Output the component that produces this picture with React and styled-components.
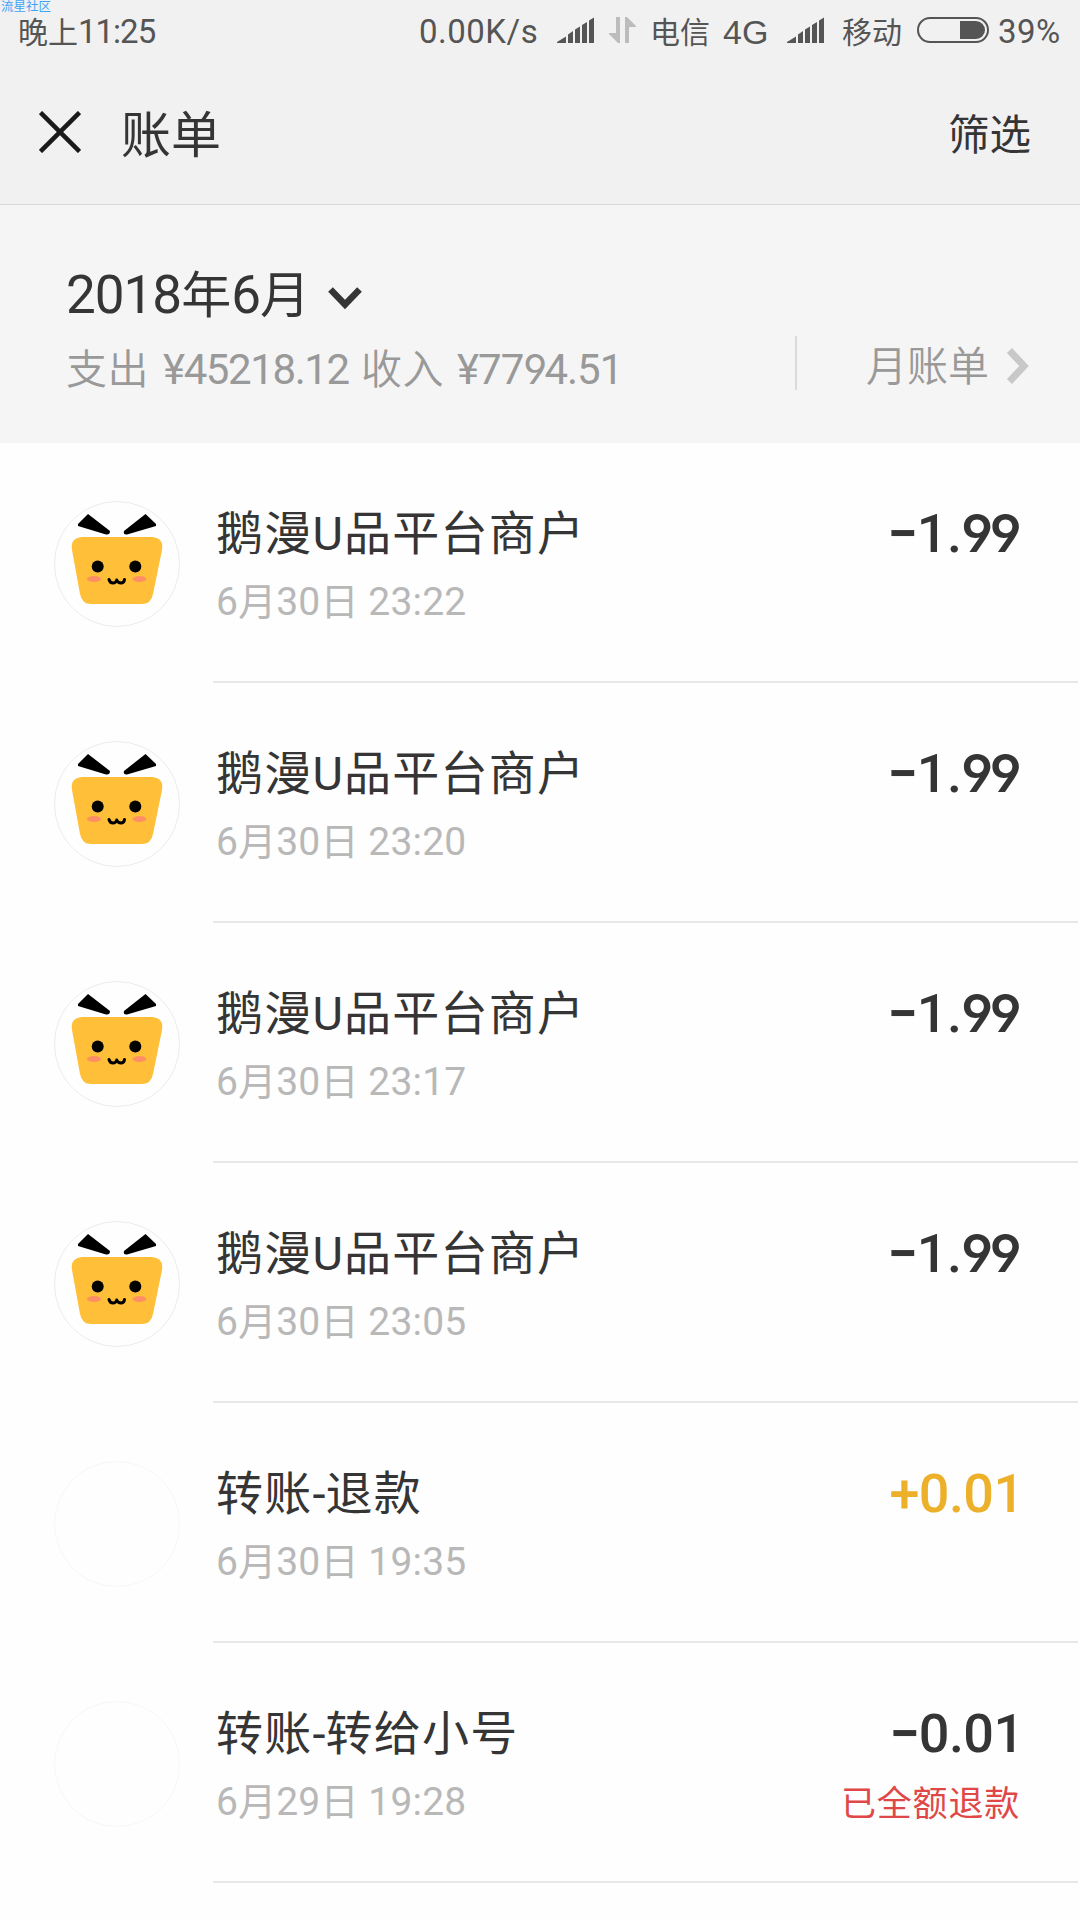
import styled, { createGlobalStyle } from "styled-components";

const GlobalStyle = createGlobalStyle`
  * {
    box-sizing: border-box;
  }
  body {
    margin: 0;
    background-color: #fefefe;
    font-family: Roboto, "Noto Sans CJK SC", sans-serif;
    color: #353535;
  }
`;

const Screen = styled.div`
  position: relative;
  width: 1080px;
  height: 1920px;
  overflow: hidden;
  background-color: #fefefe;
`;

const Watermark = styled.div`
  position: absolute;
  top: 0;
  left: 1px;
  font-size: 12.5px;
  line-height: 13px;
  color: #3fa4f5;
`;

const StatusBar = styled.div`
  height: 64px;
  padding: 0 18px 0 18px;
  display: flex;
  background-color: #f1f1f1;
  color: #555;
  font-size: 33px;
  line-height: 64px;
  white-space: nowrap;
`;

const StatusItem = styled.div`
  flex: none;
  width: ${(props) => props.$width}px;
  letter-spacing: ${(props) => props.$spacing || 0}px;

  svg {
    display: block;
  }
`;

const Network = styled(StatusItem)`
  font-family: "Liberation Sans", sans-serif;
  font-size: 34px;
`;

const Cjk = styled.span`
  font-size: ${(props) => props.$size}px;
  letter-spacing: 0;
  line-height: 0;
`;

const OpenNine = styled.span`
  font-family: Inter, sans-serif;
  font-feature-settings: "cv04";
  font-size: 0.975em;
  font-weight: ${(props) => props.$weight || 400};
  letter-spacing: -0.065em;
  line-height: 0;
`;

const Header = styled.div`
  height: 141px;
  padding: 3px 49px 0 39px;
  display: flex;
  align-items: center;
  background-color: #f1f1f1;
  border-bottom: 1px solid #d9d9d9;
`;

const CloseIcon = styled.svg`
  margin-bottom: 7px;
`;

const Title = styled.h1`
  flex: 1;
  margin: 0 0 0 40px;
  font-size: 50px;
  font-weight: 400;
  line-height: 60px;
`;

const Filter = styled.span`
  font-size: 41.5px;
  line-height: 60px;
`;

const Summary = styled.div`
  height: 238px;
  display: flex;
  background-color: #f5f5f5;
`;

const SummaryLeft = styled.div`
  width: 795px;
  padding: 56px 0 0 66px;
  white-space: nowrap;
`;

const Month = styled.div`
  height: 69px;
  display: flex;
  font-size: 53px;
  line-height: 68px;
  letter-spacing: -1px;
`;

const MonthArrow = styled.svg`
  margin: 26px 0 0 18px;
`;

const Totals = styled.div`
  height: 70px;
  display: flex;
  font-size: 42px;
  line-height: 80px;
  color: #999;
`;

const TotalLabel = styled.span`
  width: ${(props) => props.$width}px;
  font-size: 41px;
  font-weight: 350;
  letter-spacing: 0.4px;
`;

const Money = styled.span`
  width: ${(props) => props.$width}px;
  letter-spacing: ${(props) => props.$spacing}px;
`;

const Split = styled.div`
  width: 2px;
  height: 54px;
  margin-top: 131px;
  background-color: #dadada;
`;

const MonthBill = styled.div`
  height: 54px;
  margin: 135px 0 0 69px;
  display: flex;
  align-items: center;
  font-size: 41px;
  font-weight: 350;
  line-height: 54px;
  color: #999;
`;

const BillArrow = styled.svg`
  margin: -3px 0 0 18px;
`;

const Row = styled.div`
  height: 240px;
  padding-left: 54px;
  display: flex;
`;

const Avatar = styled.div`
  flex: none;
  width: 126px;
  height: 126px;
  margin: 58px 33px 0 0;
  border: 1px solid ${(props) => (props.$empty ? "#f7f7f7" : "#ececec")};
  border-radius: 50%;

  svg {
    display: block;
    margin: -1px;
  }
`;

const Content = styled.div`
  flex: 1;
  margin-right: 2px;
  padding: 61px 60px 0 3px;
  display: flex;
  justify-content: space-between;
  border-bottom: 2px solid #e8e8e8;
  white-space: nowrap;
`;

const Name = styled.div`
  font-size: 47px;
  line-height: 60px;
  letter-spacing: 1.2px;
`;

const Hyphen = styled.span`
  margin-right: -1px;
`;

const Time = styled.div`
  font-size: 39px;
  line-height: 76px;
  letter-spacing: 0.2px;
  color: #b8b8b8;
`;

const AmountBox = styled.div`
  text-align: right;
`;

const Amount = styled.div`
  margin-right: ${(props) => (props.$nines ? 0 : -5.5)}px;
  font-size: 54px;
  font-weight: 500;
  line-height: 60px;
  letter-spacing: -0.6px;
  color: ${(props) => (props.$income ? "#edb02a" : "#353535")};
`;

const Minus = styled.span`
  font-weight: 700;
`;

const Refund = styled.div`
  margin-right: -2px;
  font-size: 35px;
  line-height: 82px;
  letter-spacing: 0.8px;
  color: #e04848;
`;

const bills = [
  { name: ["鹅漫", "U", "品平台商户"], day: ["6", "30"], time: "23:22", amount: "1.99", goose: true },
  { name: ["鹅漫", "U", "品平台商户"], day: ["6", "30"], time: "23:20", amount: "1.99", goose: true },
  { name: ["鹅漫", "U", "品平台商户"], day: ["6", "30"], time: "23:17", amount: "1.99", goose: true },
  { name: ["鹅漫", "U", "品平台商户"], day: ["6", "30"], time: "23:05", amount: "1.99", goose: true },
  { name: ["转账", "-", "退款"], day: ["6", "30"], time: "19:35", amount: "0.01", income: true },
  { name: ["转账", "-", "转给小号"], day: ["6", "29"], time: "19:28", amount: "0.01", refund: "已全额退款" },
];

const Signal = () => (
  <svg width="38" height="64" viewBox="0 0 38 64" fill="#555">
    <path d="M0 43V42L9 36.500V43Z M11 43V34.500L16 31V43Z M18 43V29.500L23 26.500V43Z M25 43V25L30 22V43Z M32 43V20.500L37 17.500V43Z" />
  </svg>
);

const Transfer = () => (
  <svg width="28" height="64" viewBox="0 0 28 64" fill="#bcbcbc">
    <path d="M7 17H11V43H9L0 34V33H7Z M16 17H18L27 26V27H20V43H16Z" />
  </svg>
);

const Battery = () => (
  <svg width="72" height="64" viewBox="0 0 72 64">
    <rect x="1" y="18" width="70" height="24" rx="12" fill="none" stroke="#555" strokeWidth="2" />
    <path d="M43 21H59A9 9 0 0 1 59 39H43Z" fill="#555" />
  </svg>
);

const Goose = () => (
  <svg width="126" height="126" viewBox="54 501 126 126">
    <path
      d="M82 537H152Q164 538 162 550L153 594Q151 604 142 604H91Q82 604 80 594L72 550Q70 538 82 537Z"
      fill="#ffbf38"
    />
    <path d="M88 514L110 531Q110 535 106 534.500L78 526V524Z" />
    <path d="M145.500 514L124 531Q123 535 127 534.500L156 526V524Z" />
    <circle cx="97.700" cy="566.500" r="6" />
    <circle cx="135.300" cy="566.500" r="6" />
    <ellipse cx="94" cy="579" rx="7" ry="3" fill="#ff8f66" />
    <ellipse cx="139.500" cy="579" rx="7" ry="3" fill="#ff8f66" />
    <path
      d="M109 579.500Q110 583 113 583Q116 583 116.700 580Q118 583 121 583Q124 583 124.500 579.500"
      fill="none"
      stroke="#000"
      strokeWidth="3"
      strokeLinecap="round"
      strokeLinejoin="round"
    />
  </svg>
);

// nines are drawn with a straight leg, the other digits stay in Roboto
const Digits = ({ value, weight }) =>
  value.split(/(9+)/).map((part, i) =>
    part.startsWith("9") ? (
      <OpenNine key={i} $weight={weight}>
        {part}
      </OpenNine>
    ) : (
      part
    )
  );

const Bill = ({ bill }) => (
  <Row>
    <Avatar $empty={!bill.goose}>{bill.goose && <Goose />}</Avatar>
    <Content>
      <div>
        <Name>
          {bill.name[0]}
          {bill.name[1] === "-" ? <Hyphen>-</Hyphen> : bill.name[1]}
          {bill.name[2]}
        </Name>
        <Time>
          {bill.day[0]}
          <Cjk $size={38}>月</Cjk>
          {bill.day[1]}
          <Cjk $size={38}>日</Cjk> {bill.time}
        </Time>
      </div>
      <AmountBox>
        <Amount $income={bill.income} $nines={bill.amount.endsWith("9")}>
          {bill.income ? "+" : <Minus>−</Minus>}
          <Digits value={bill.amount} weight={600} />
        </Amount>
        {bill.refund && <Refund>{bill.refund}</Refund>}
      </AmountBox>
    </Content>
  </Row>
);

const App = () => {
  return (
    <Screen>
      <GlobalStyle />
      <StatusBar>
        <StatusItem $width={401} $spacing={-1}>
          <Cjk $size={30}>晚上</Cjk>11:25
        </StatusItem>
        <StatusItem $width={138} $spacing={0.5}>0.00K/s</StatusItem>
        <StatusItem $width={52}><Signal /></StatusItem>
        <StatusItem $width={41}><Transfer /></StatusItem>
        <StatusItem $width={73}><Cjk $size={30}>电信</Cjk></StatusItem>
        <Network $width={64}>4G</Network>
        <StatusItem $width={55}><Signal /></StatusItem>
        <StatusItem $width={75}><Cjk $size={30}>移动</Cjk></StatusItem>
        <StatusItem $width={81}><Battery /></StatusItem>
        <StatusItem $width={66} $spacing={0.5}>39%</StatusItem>
      </StatusBar>
      <Header>
        <CloseIcon width="42" height="42" viewBox="0 0 42 42" fill="none" stroke="#1a1a1a" strokeWidth="4.500">
          <path d="M1.500 1.500L40.500 40.500M40.500 1.500L1.500 40.500" />
        </CloseIcon>
        <Title>账单</Title>
        <Filter>筛选</Filter>
      </Header>
      <Summary>
        <SummaryLeft>
          <Month>
            <span>
              2018<Cjk $size={50}>年</Cjk>6<Cjk $size={50}>月</Cjk>
            </span>
            <MonthArrow width="34" height="23" viewBox="0 0 34 23" fill="none" stroke="#353535" strokeWidth="6.500">
              <path d="M2.500 2.500L17 17.500L31.500 2.500" />
            </MonthArrow>
          </Month>
          <Totals>
            <TotalLabel $width={97}>支出</TotalLabel>
            <Money $width={198} $spacing={-1.4}>¥45218.12</Money>
            <TotalLabel $width={96}>收入</TotalLabel>
            <Money $width={170} $spacing={-1}>
              <Digits value="¥7794.51" />
            </Money>
          </Totals>
        </SummaryLeft>
        <Split />
        <MonthBill>
          月账单
          <BillArrow width="22" height="36" viewBox="0 0 22 36" fill="none" stroke="#c8c8c8" strokeWidth="7">
            <path d="M2.500 2.500L17 18L2.500 33.500" />
          </BillArrow>
        </MonthBill>
      </Summary>
      {bills.map((bill) => (
        <Bill key={bill.day[1] + bill.time} bill={bill} />
      ))}
      <Watermark>流星社区</Watermark>
    </Screen>
  );
};

export default App;
